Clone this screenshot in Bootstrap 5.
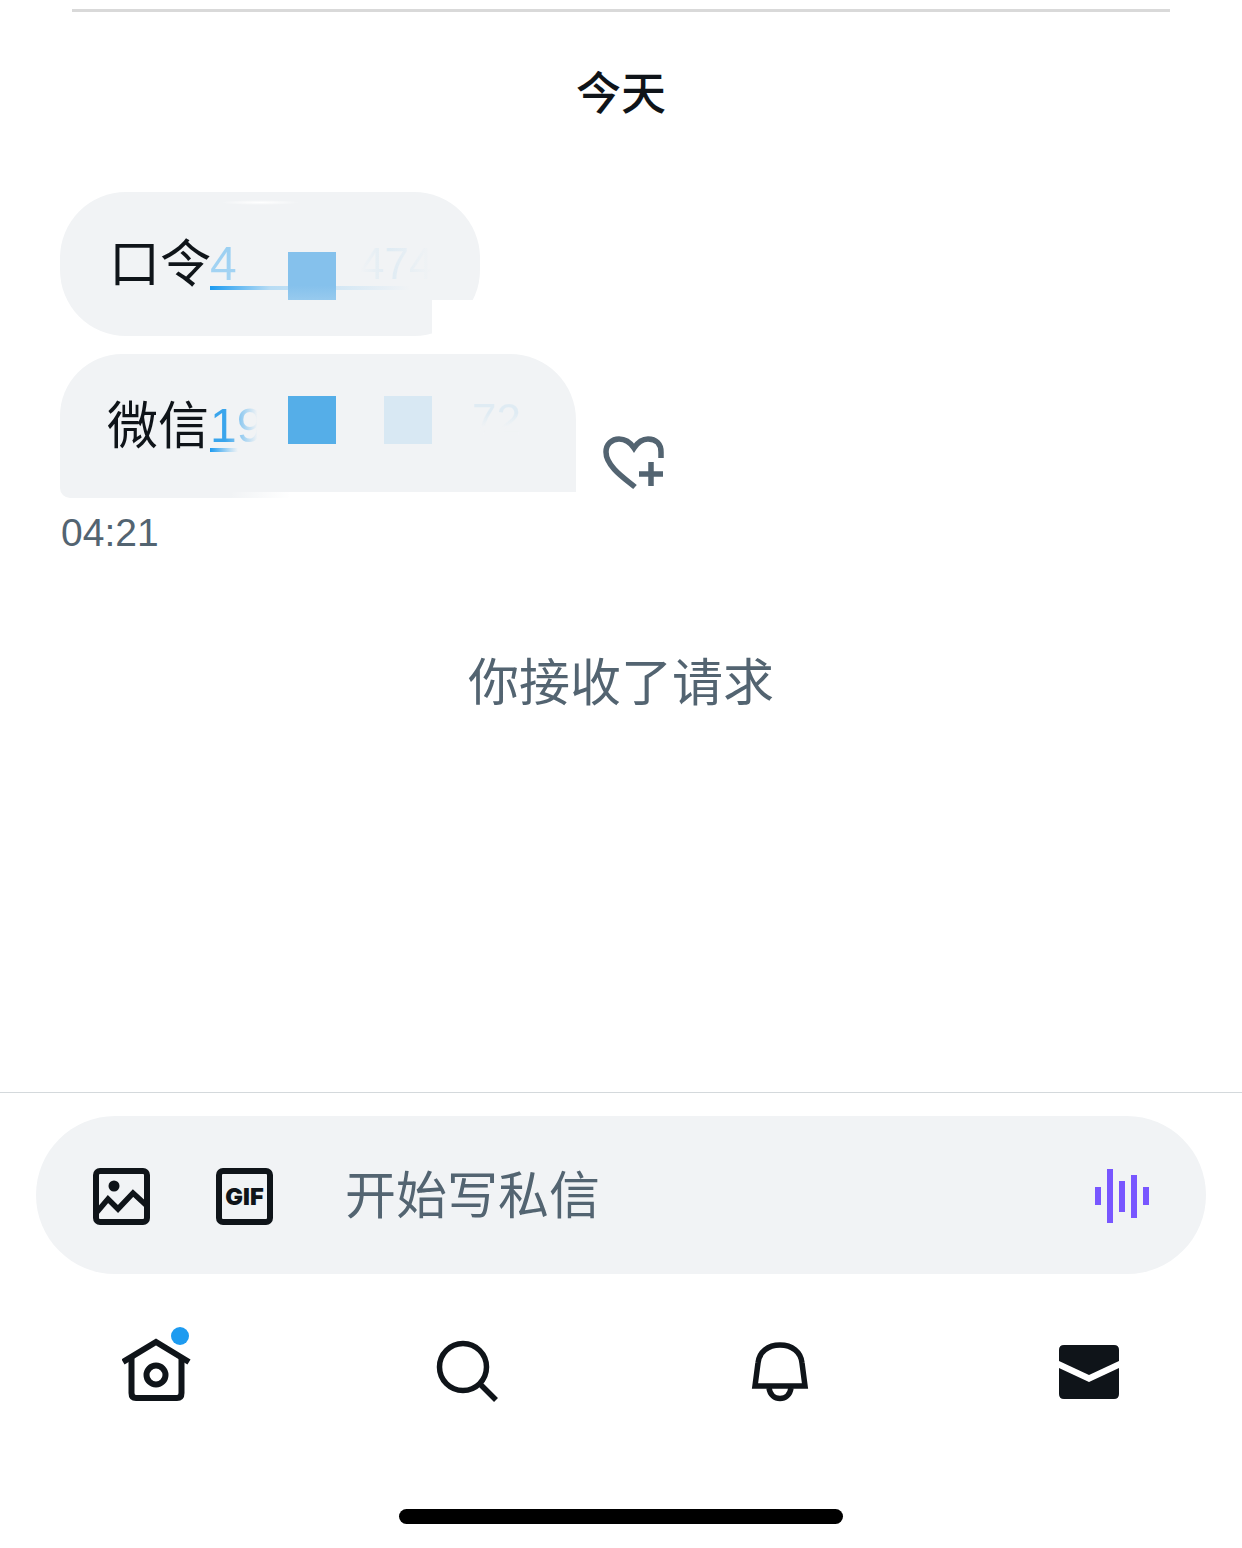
<!DOCTYPE html>
<html lang="zh-CN">
<head>
  <meta charset="UTF-8">
  <meta name="viewport" content="width=device-width, initial-scale=1.0">
  <title>私信</title>
  <link href="https://cdn.jsdelivr.net/npm/bootstrap@5.3.0/dist/css/bootstrap.min.css" rel="stylesheet">
  <style>
    body { background: #fff; color: #0f1419; font-family: "Liberation Sans", "Noto Sans CJK SC", sans-serif; }
    .page-wrap { width: 1242px; height: 1548px; overflow: hidden; }
    .top-rule { height: 3px; margin: 9px 72px 0; background: #d9d9d9; }
    .day-title { height: 180px; padding-top: 58px; font-size: 45px; line-height: 50px; font-weight: 500; text-align: center; }
    .chat-area { height: 900px; padding-left: 60px; }
    .bubble { position: relative; height: 144px; background: #f1f3f5; font-size: 51px; line-height: 146px; white-space: nowrap; }
    .bubble-one { width: 420px; border-radius: 66px; padding-left: 49px; margin-bottom: 18px; }
    .bubble-two { width: 516px; border-radius: 62px 66px 0 10px; padding-left: 47px; }
    .notch { position: absolute; left: 372px; top: 108px; width: 50px; height: 38px; background: #fff; }
    .glint { position: absolute; left: 160px; top: 8px; width: 80px; height: 5px; background: radial-gradient(ellipse, #fff, rgba(255,255,255,0) 70%); }
    .bottom-cut { position: absolute; left: 170px; right: 0; bottom: 0; height: 6px; background: linear-gradient(90deg, rgba(255,255,255,0), #fff 60px); }
    .fade-link { position: absolute; top: 0; font-size: 48px; line-height: 144px; font-family: "Liberation Sans", sans-serif; color: transparent; -webkit-background-clip: text; background-clip: text; }
    .link-one { left: 150px; width: 30px; background-image: linear-gradient(#8cc8f0, #b5dcf5); }
    .link-two { left: 150px; width: 50px; background-image: linear-gradient(90deg, #3aa5ec 30%, #f1f3f5 95%); }
    .ghost-one { left: 300px; width: 72px; font-size: 44px; background-image: linear-gradient(90deg, #f1f3f5, #dfebf3 40%, #f1f3f5); }
    .ghost-two { left: 412px; width: 50px; font-size: 44px; top: -6px; background-image: linear-gradient(#dfebf3 45%, #f1f3f5 55%); }
    .under-line { position: absolute; height: 4px; left: 150px; }
    .line-one { top: 94px; width: 200px; background: linear-gradient(90deg, #1d9bf0, #b8dcf4 30%, rgba(239,243,244,0)); }
    .line-two { top: 94px; width: 28px; background: linear-gradient(90deg, #1d9bf0, #b8dcf4 70%, rgba(239,243,244,0)); }
    .patch { position: absolute; width: 48px; height: 48px; }
    .patch-a { left: 228px; top: 60px; background: linear-gradient(#85c1ec 70%, #97caee); }
    .patch-b { left: 228px; top: 42px; background: #55aee8; }
    .patch-c { left: 324px; top: 42px; background: #d8e8f3; }
    .heart-btn { margin: 0 0 6px 26px; line-height: 0; }
    .time-label { margin-top: 13px; margin-left: 1px; font-size: 39px; line-height: 44px; color: #536471; }
    .system-note { margin-top: 92px; margin-left: -60px; font-size: 51px; line-height: 74px; text-align: center; color: #536471; }
    .composer-line { height: 1px; background: #d4d9dc; }
    .composer { height: 158px; margin: 23px 36px 0; border-radius: 79px; background: #f1f3f5; padding: 2px 57px 0 57px; }
    .attach-gap { margin-right: 66px; }
    .placeholder-text { margin-left: 72px; font-size: 51px; color: #536471; line-height: 1; }
    .gif-label { font-family: "Inter", "Liberation Sans", sans-serif; font-size: 23.5px; font-weight: 900; }
    .tab-row { height: 130px; padding-left: 122px; }
    .tab-home { margin: 53px 244px 0 0; }
    .tab-search { margin: 66px 250px 0 0; }
    .tab-bell { margin: 68px 249px 0 0; }
    .tab-mail { margin-top: 71px; }
    .home-bar { width: 444px; height: 15px; margin: 105px auto 0; border-radius: 8px; background: #000; }
  </style>
</head>
<body>
  <div class="page-wrap d-flex flex-column">
    <div class="top-rule"></div>
    <div class="day-title">今天</div>

    <div class="chat-area">
      <div class="bubble bubble-one">
        口令
        <span class="fade-link link-one">4</span>
        <span class="fade-link ghost-one">474</span>
        <div class="under-line line-one"></div>
        <div class="patch patch-a"></div>
        <div class="glint"></div>
        <div class="notch"></div>
      </div>
      <div class="d-flex align-items-end">
        <div class="bubble bubble-two">
          微信
          <span class="fade-link link-two">19</span>
          <span class="fade-link ghost-two">72</span>
          <div class="under-line line-two"></div>
          <div class="patch patch-b"></div>
          <div class="patch patch-c"></div>
          <div class="bottom-cut"></div>
        </div>
        <div class="heart-btn">
          <svg width="66" height="60" viewBox="0 0 66 60" fill="none" stroke="#536471" stroke-width="5.5">
            <path d="M33 55 C25 48 4 35 4 20 C4 12 10 7 17 7 C23 7 28 10 32 16 C36 10 41 7 46 7 C54 7 59 12 59 20 V26"/>
            <path d="M49 30 V54 M37 42 H61"/>
          </svg>
        </div>
      </div>
      <div class="time-label">04:21</div>
      <div class="system-note">你接收了请求</div>
    </div>

    <div class="composer-line"></div>
    <div class="composer d-flex align-items-center">
      <svg class="attach-gap" width="57" height="57" viewBox="0 0 57 57" fill="none" stroke="#0f1419" stroke-width="6">
        <rect x="3" y="3" width="51" height="51" rx="4"/>
        <circle cx="21" cy="18" r="5.5" fill="#0f1419" stroke="none"/>
        <path d="M4 44 L15 31 L25 41 L40 25 L53 37" stroke-width="5.5"/>
      </svg>
      <svg width="57" height="57" viewBox="0 0 57 57" fill="none">
        <rect x="3" y="3" width="51" height="51" rx="4" stroke="#0f1419" stroke-width="6"/>
        <text class="gif-label" x="28.5" y="37" text-anchor="middle" fill="#0f1419">GIF</text>
      </svg>
      <div class="placeholder-text flex-grow-1">开始写私信</div>
      <svg width="54" height="54" viewBox="0 0 54 54" fill="#7856ff">
        <rect x="0" y="18" width="6" height="18"/>
        <rect x="12" y="0" width="6" height="54"/>
        <rect x="24" y="12" width="6" height="31"/>
        <rect x="36" y="6" width="6" height="43"/>
        <rect x="48" y="18" width="6" height="18"/>
      </svg>
    </div>

    <div class="tab-row d-flex align-items-start">
      <svg class="tab-home" width="70" height="77" viewBox="0 0 70 77" fill="none" stroke="#0f1419" stroke-width="6">
        <path d="M1 35 L34 15 L67 35"/>
        <path d="M9.5 31 V66 Q9.5 71 14 71 H55 Q59.5 71 59.5 66 V31"/>
        <circle cx="34" cy="48" r="9.5"/>
        <circle cx="58" cy="9" r="9" fill="#1d9bf0" stroke="none"/>
      </svg>
      <svg class="tab-search" width="64" height="64" viewBox="0 0 64 64" fill="none" stroke="#0f1419" stroke-width="5.5">
        <circle cx="27" cy="27" r="23.5"/>
        <path d="M44 44 L60 60"/>
      </svg>
      <svg class="tab-bell" width="60" height="60" viewBox="0 0 60 60" fill="none" stroke="#0f1419" stroke-width="5.5">
        <path d="M5 44 L8 21 C9 10 18 3 30 3 C42 3 51 10 52 21 L55 44 Z"/>
        <path d="M19 46 C20 53 25 56.5 30 56.5 C35 56.5 40 53 41 46"/>
      </svg>
      <svg class="tab-mail" width="60" height="54" viewBox="0 0 60 54">
        <path d="M5 0 H55 Q60 0 60 5 V16 L30 30 L0 16 V5 Q0 0 5 0 Z" fill="#0f1419"/>
        <path d="M0 23 L30 37 L60 23 V49 Q60 54 55 54 H5 Q0 54 0 49 Z" fill="#0f1419"/>
      </svg>
    </div>
    <div class="home-bar"></div>
  </div>
</body>
</html>
